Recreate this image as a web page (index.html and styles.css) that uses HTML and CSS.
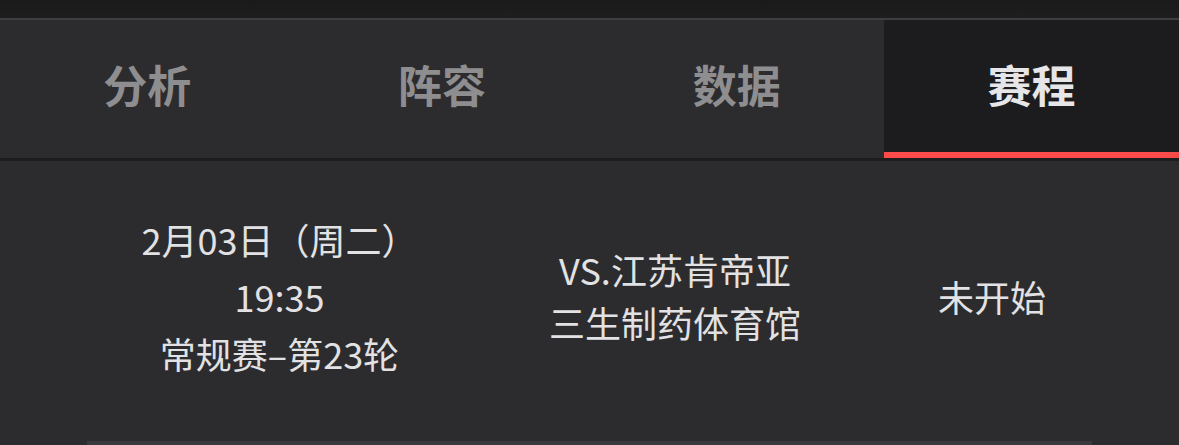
FILE: index.html
```html
<!DOCTYPE html>
<html lang="zh-CN">
<head>
<meta charset="utf-8">
<link rel="stylesheet" href="styles.css">
</head>
<body>
<div class="topband"></div>
<nav class="tabs">
  <div class="tab">分析</div>
  <div class="tab">阵容</div>
  <div class="tab">数据</div>
  <div class="tab active">赛程</div>
</nav>
<div class="divider"></div>
<section class="content">
  <div class="row">
    <div class="col col-time">
      <div class="line">2月03日（周二）</div>
      <div class="line">19:35</div>
      <div class="line">常规赛–第23轮</div>
    </div>
    <div class="col col-venue">
      <div class="line">VS.江苏肯帝亚</div>
      <div class="line">三生制药体育馆</div>
    </div>
    <div class="col col-status">
      <div class="line">未开始</div>
    </div>
  </div>
</section>
</body>
</html>
```

FILE: styles.css
```css
html, body {
  margin: 0;
  padding: 0;
  background: #2c2c2e;
  width: 1179px;
  height: 445px;
  overflow: hidden;
  font-family: "Noto Sans CJK SC", "Noto Sans", sans-serif;
}
.topband {
  height: 18px;
  background: linear-gradient(#1a1a1a, #1e1e1f);
  border-bottom: 2px solid #3e3e42;
}
.tabs {
  display: flex;
  height: 138px;
  background: #2c2c2e;
}
.tab {
  flex: 1;
  display: flex;
  align-items: center;
  justify-content: center;
  font-size: 44px;
  font-weight: 700;
  color: #8e8e90;
  box-sizing: border-box;
  padding-bottom: 10px;
}
.tab.active {
  flex: 0 0 295px;
  background: #1c1c1e;
  color: #e6e6e8;
  border-bottom: 6px solid #fb4a4a;
  padding-bottom: 4px;
}
.divider {
  height: 3px;
  background: #1c1c1e;
}
.content {
  padding: 0 87px;
}
.row {
  display: grid;
  grid-template-columns: 371px 434px 1fr;
  height: 280px;
  box-sizing: content-box;
  border-bottom: 4px solid #3a3a3c;
  color: #e2e2e4;
  font-size: 36px;
}
.col {
  display: flex;
  flex-direction: column;
  justify-content: center;
  align-items: center;
  text-align: center;
  padding-bottom: 10px;
}
.col-time {
  padding-left: 14px;
}
.col-time .line {
  line-height: 57px;
}
.col-venue .line {
  line-height: 53px;
}
```
